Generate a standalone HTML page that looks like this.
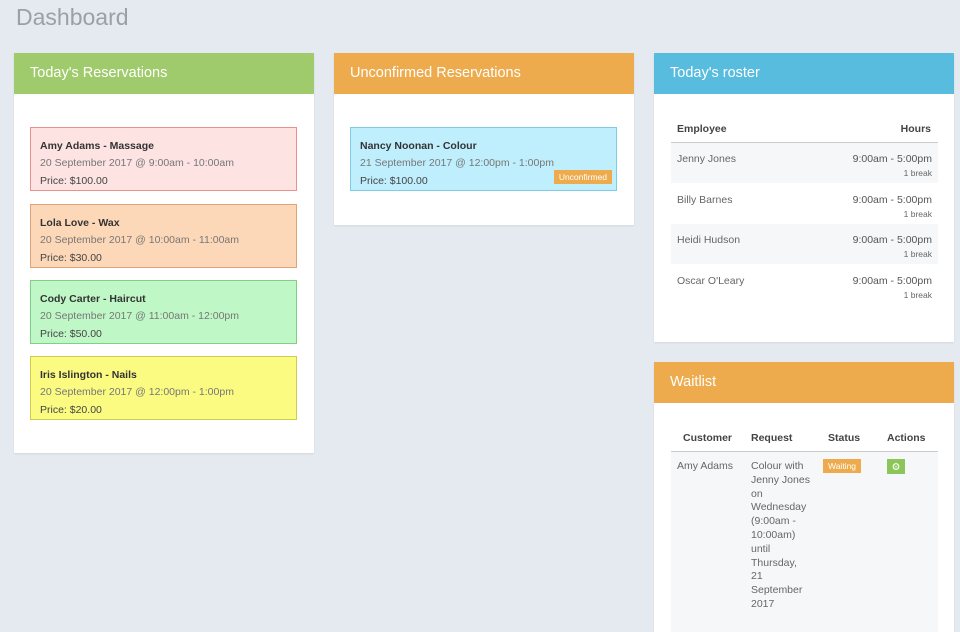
<!DOCTYPE html>
<html><head><meta charset="utf-8"><style>
*{margin:0;padding:0;box-sizing:border-box}
body{width:960px;height:620px;overflow:hidden;background:#e4eaef;font-family:"Liberation Sans",sans-serif;position:relative;color:#555}
.a{position:absolute}
h1{position:absolute;left:16px;top:4px;font-weight:normal;font-size:23px;color:#9aa0a6}
.panel{position:absolute;background:#fff;box-shadow:0 1px 2px rgba(0,0,0,.08)}
.hd{height:41px;color:#fff;font-size:14.5px;padding:13px 16px;line-height:15px}
.card{position:absolute;left:16px;width:267px;height:64px;border:1px solid;font-size:10.5px;padding:12px 9px 0}
.card b{display:block;color:#333;font-size:10.5px;margin-bottom:5px}
.card .d{color:#777;margin-bottom:6px}
.card .p{color:#444}
.th{font-weight:bold;font-size:10.5px;color:#444}
.row{position:absolute;left:17px;width:267px;height:40px;font-size:10.5px}
.row .n{position:absolute;left:6px;top:10px;color:#666}
.row .t{position:absolute;right:6px;top:10px;color:#555}
.row .bk{position:absolute;right:6px;top:25px;font-size:8.5px;color:#666}
</style></head><body>
<h1>Dashboard</h1>

<div class="panel" style="left:14px;top:53px;width:300px;height:400px">
<div class="hd" style="background:#9fcb6c">Today's Reservations</div>
<div class="card" style="top:74px;background:#fde3e2;border-color:#e9918b"><b>Amy Adams - Massage</b><div class="d">20 September 2017 @ 9:00am - 10:00am</div><div class="p">Price: $100.00</div></div>
<div class="card" style="top:151px;background:#fdd8b8;border-color:#e1a277"><b>Lola Love - Wax</b><div class="d">20 September 2017 @ 10:00am - 11:00am</div><div class="p">Price: $30.00</div></div>
<div class="card" style="top:227px;background:#bff7c7;border-color:#7fcf86"><b>Cody Carter - Haircut</b><div class="d">20 September 2017 @ 11:00am - 12:00pm</div><div class="p">Price: $50.00</div></div>
<div class="card" style="top:303px;background:#fbfb82;border-color:#cfcc52"><b>Iris Islington - Nails</b><div class="d">20 September 2017 @ 12:00pm - 1:00pm</div><div class="p">Price: $20.00</div></div>
</div>

<div class="panel" style="left:334px;top:53px;width:300px;height:172px">
<div class="hd" style="background:#edab4d">Unconfirmed Reservations</div>
<div class="card" style="top:74px;background:#bfeefd;border-color:#7fcbe4"><b>Nancy Noonan - Colour</b><div class="d">21 September 2017 @ 12:00pm - 1:00pm</div><div class="p">Price: $100.00</div>
<div class="a" style="right:4px;bottom:6px;background:#edab4d;color:#fff;font-size:8.5px;padding:2px 5px">Unconfirmed</div></div>
</div>

<div class="panel" style="left:654px;top:53px;width:300px;height:289px">
<div class="hd" style="background:#57bcdd">Today's roster</div>
<div class="a th" style="left:23px;top:70px">Employee</div>
<div class="a th" style="right:23px;top:70px">Hours</div>
<div class="a" style="left:17px;top:89px;width:267px;height:1px;background:#ccc"></div>
<div class="row" style="top:90px;background:#f5f7f9"><span class="n">Jenny Jones</span><span class="t">9:00am - 5:00pm</span><span class="bk">1 break</span></div>
<div class="row" style="top:131px"><span class="n">Billy Barnes</span><span class="t">9:00am - 5:00pm</span><span class="bk">1 break</span></div>
<div class="row" style="top:171px;background:#f5f7f9"><span class="n">Heidi Hudson</span><span class="t">9:00am - 5:00pm</span><span class="bk">1 break</span></div>
<div class="row" style="top:212px"><span class="n">Oscar O'Leary</span><span class="t">9:00am - 5:00pm</span><span class="bk">1 break</span></div>
</div>

<div class="panel" style="left:654px;top:362px;width:300px;height:270px">
<div class="hd" style="background:#edab4d">Waitlist</div>
<div class="a th" style="left:29px;top:70px">Customer</div>
<div class="a th" style="left:97px;top:70px">Request</div>
<div class="a th" style="left:174px;top:70px">Status</div>
<div class="a th" style="left:233px;top:70px">Actions</div>
<div class="a" style="left:17px;top:89px;width:267px;height:1px;background:#ccc"></div>
<div class="a" style="left:17px;top:90px;width:267px;height:180px;background:#f5f7f9"></div>
<div class="a" style="left:23px;top:98px;font-size:10.5px;color:#666">Amy Adams</div>
<div class="a" style="left:97px;top:98px;font-size:10.5px;color:#666;line-height:13.8px;white-space:nowrap">Colour with<br>Jenny Jones<br>on<br>Wednesday<br>(9:00am -<br>10:00am)<br>until<br>Thursday,<br>21<br>September<br>2017</div>
<div class="a" style="left:169px;top:97px;background:#edab4d;color:#fff;font-size:8.5px;padding:2px 5px">Waiting</div>
<div class="a" style="left:233px;top:97px;width:18px;height:15px;background:#8cc65a"><svg width="18" height="15"><circle cx="9" cy="7.5" r="2.8" fill="none" stroke="#fff" stroke-width="1.2"/><circle cx="9" cy="7.5" r="0.8" fill="#fff"/></svg></div>
</div>
</body></html>
